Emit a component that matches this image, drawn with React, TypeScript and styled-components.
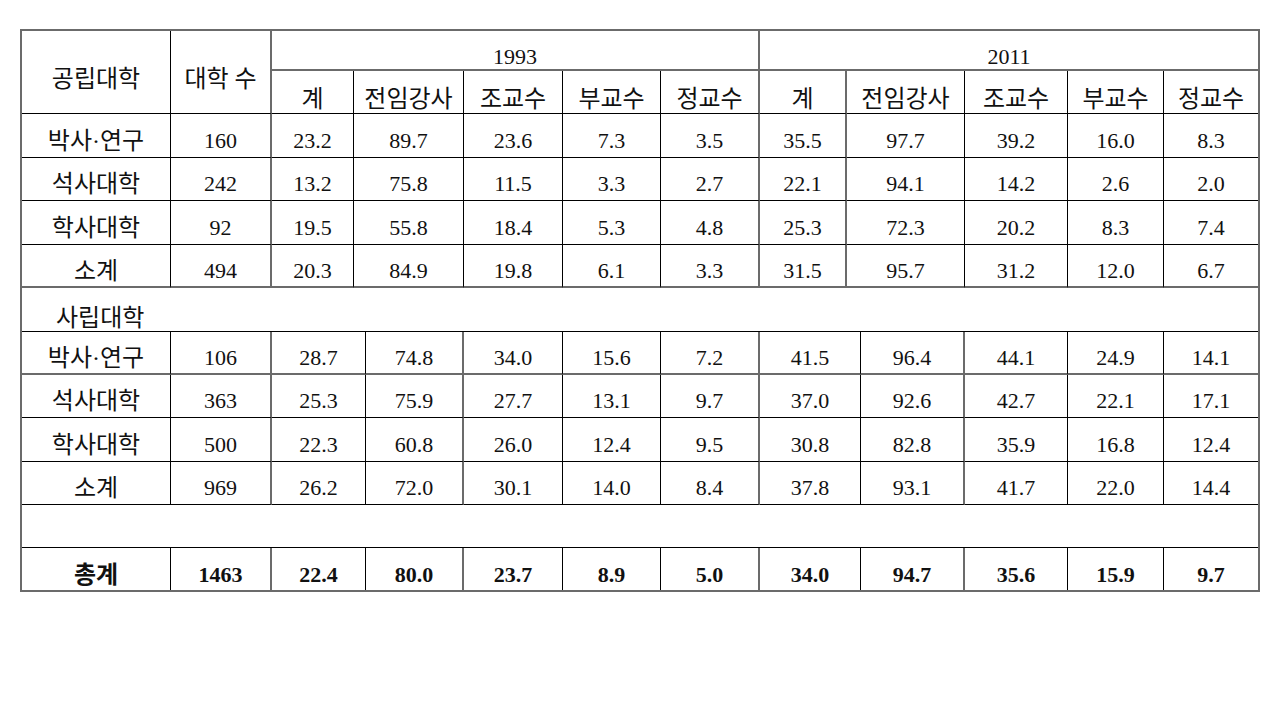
import React from 'react';
import styled, { createGlobalStyle, css } from 'styled-components';

type Edge = 'k' | 'g' | 'n';

const edge = (e: Edge = 'k') =>
  e === 'n' ? 'none' : e === 'g' ? '2px solid #6b6b6b' : '1px solid #000';

const GlobalStyle = createGlobalStyle`
  html, body {
    margin: 0;
    background: #ffffff;
  }
  body {
    font-family: "Liberation Serif", "Noto Sans CJK KR", serif;
    color: #111;
  }
`;

const Frame = styled.div`
  box-sizing: border-box;
  width: 1240px;
  margin: 29px 0 0 20px;
  border: 2px solid #6b6b6b;
`;

const Section = styled.div<{ $cols: string; $rows: string }>`
  display: grid;
  grid-template-columns: ${p => p.$cols};
  grid-template-rows: ${p => p.$rows};
`;

interface CellProps {
  $r?: Edge;
  $b?: Edge;
  $span?: number;
}

const Cell = styled.div<CellProps>`
  box-sizing: border-box;
  display: flex;
  align-items: center;
  justify-content: center;
  font-size: 22px;
  line-height: 26px;
  white-space: nowrap;
  border-right: ${p => edge(p.$r)};
  border-bottom: ${p => edge(p.$b)};
  ${p =>
    p.$span &&
    css`
      grid-column: span ${p.$span};
    `}
`;

// Korean labels render a touch larger than the digits
const Ko = styled.span`
  font-size: 24px;
  line-height: 28px;
`;

const CornerCell = styled(Cell)`
  grid-row: span 2;
  padding-top: 14px;
`;

const YearCell = styled(Cell)`
  align-items: flex-start;
  padding-top: 13px;
`;

const SubHeadCell = styled(Cell)`
  align-items: flex-end;
  padding-bottom: 0;
`;

const DataCell = styled(Cell)`
  padding-top: 10px;
`;

const GroupCell = styled(Cell)`
  justify-content: flex-start;
  padding: 16px 0 0 34px;
`;

const TotalCell = styled(Cell)`
  font-weight: 700;
  padding-top: 12px;
`;

const TOP_COLS = '149px 101px 82px 110px 99px 98px 99px 87px 118px 103px 96px 94px';
const BOTTOM_COLS = '149px 101px 94px 98px 99px 98px 99px 101px 104px 103px 96px 94px';

const TOP_RIGHT: Edge[] = ['k', 'g', 'k', 'k', 'k', 'k', 'g', 'g', 'k', 'k', 'k', 'n'];
const BOTTOM_RIGHT: Edge[] = ['k', 'g', 'k', 'g', 'k', 'k', 'g', 'k', 'g', 'k', 'k', 'n'];

const SUB_HEADS = ['계', '전임강사', '조교수', '부교수', '정교수'];

const publicRows: string[][] = [
  ['박사·연구', '160', '23.2', '89.7', '23.6', '7.3', '3.5', '35.5', '97.7', '39.2', '16.0', '8.3'],
  ['석사대학', '242', '13.2', '75.8', '11.5', '3.3', '2.7', '22.1', '94.1', '14.2', '2.6', '2.0'],
  ['학사대학', '92', '19.5', '55.8', '18.4', '5.3', '4.8', '25.3', '72.3', '20.2', '8.3', '7.4'],
  ['소계', '494', '20.3', '84.9', '19.8', '6.1', '3.3', '31.5', '95.7', '31.2', '12.0', '6.7'],
];
const publicBottoms: Edge[] = ['k', 'k', 'k', 'g'];

const privateRows: string[][] = [
  ['박사·연구', '106', '28.7', '74.8', '34.0', '15.6', '7.2', '41.5', '96.4', '44.1', '24.9', '14.1'],
  ['석사대학', '363', '25.3', '75.9', '27.7', '13.1', '9.7', '37.0', '92.6', '42.7', '22.1', '17.1'],
  ['학사대학', '500', '22.3', '60.8', '26.0', '12.4', '9.5', '30.8', '82.8', '35.9', '16.8', '12.4'],
  ['소계', '969', '26.2', '72.0', '30.1', '14.0', '8.4', '37.8', '93.1', '41.7', '22.0', '14.4'],
];
const privateBottoms: Edge[] = ['g', 'k', 'k', 'k'];

const totalRow = ['총계', '1463', '22.4', '80.0', '23.7', '8.9', '5.0', '34.0', '94.7', '35.6', '15.9', '9.7'];

const label = (v: string, ci: number) => (ci === 0 ? <Ko>{v}</Ko> : v);

const App = (): JSX.Element => {
  return (
    <>
      <GlobalStyle />
      <Frame>
        <Section $cols={TOP_COLS} $rows="40px 43px 44px 43px 44px 43px">
          <CornerCell $r={TOP_RIGHT[0]}>
            <Ko>공립대학</Ko>
          </CornerCell>
          <CornerCell $r={TOP_RIGHT[1]}>
            <Ko>대학 수</Ko>
          </CornerCell>
          <YearCell $span={5} $r="g" $b="g">
            1993
          </YearCell>
          <YearCell $span={5} $r="n" $b="g">
            2011
          </YearCell>
          {[...SUB_HEADS, ...SUB_HEADS].map((h, i) => (
            <SubHeadCell key={`h${i}`} $r={TOP_RIGHT[i + 2]}>
              <Ko>{h}</Ko>
            </SubHeadCell>
          ))}
          {publicRows.map((row, ri) =>
            row.map((v, ci) => (
              <DataCell key={`p${ri}-${ci}`} $r={TOP_RIGHT[ci]} $b={publicBottoms[ri]}>
                {label(v, ci)}
              </DataCell>
            ))
          )}
        </Section>
        <Section $cols={BOTTOM_COLS} $rows="44px 43px 43px 44px 43px 43px 42px">
          <GroupCell $span={12} $r="n">
            <Ko>사립대학</Ko>
          </GroupCell>
          {privateRows.map((row, ri) =>
            row.map((v, ci) => (
              <DataCell key={`s${ri}-${ci}`} $r={BOTTOM_RIGHT[ci]} $b={privateBottoms[ri]}>
                {label(v, ci)}
              </DataCell>
            ))
          )}
          <Cell $span={12} $r="n" />
          {totalRow.map((v, ci) => (
            <TotalCell key={`t${ci}`} $r={BOTTOM_RIGHT[ci]} $b="n">
              {label(v, ci)}
            </TotalCell>
          ))}
        </Section>
      </Frame>
    </>
  );
};

export default App;
